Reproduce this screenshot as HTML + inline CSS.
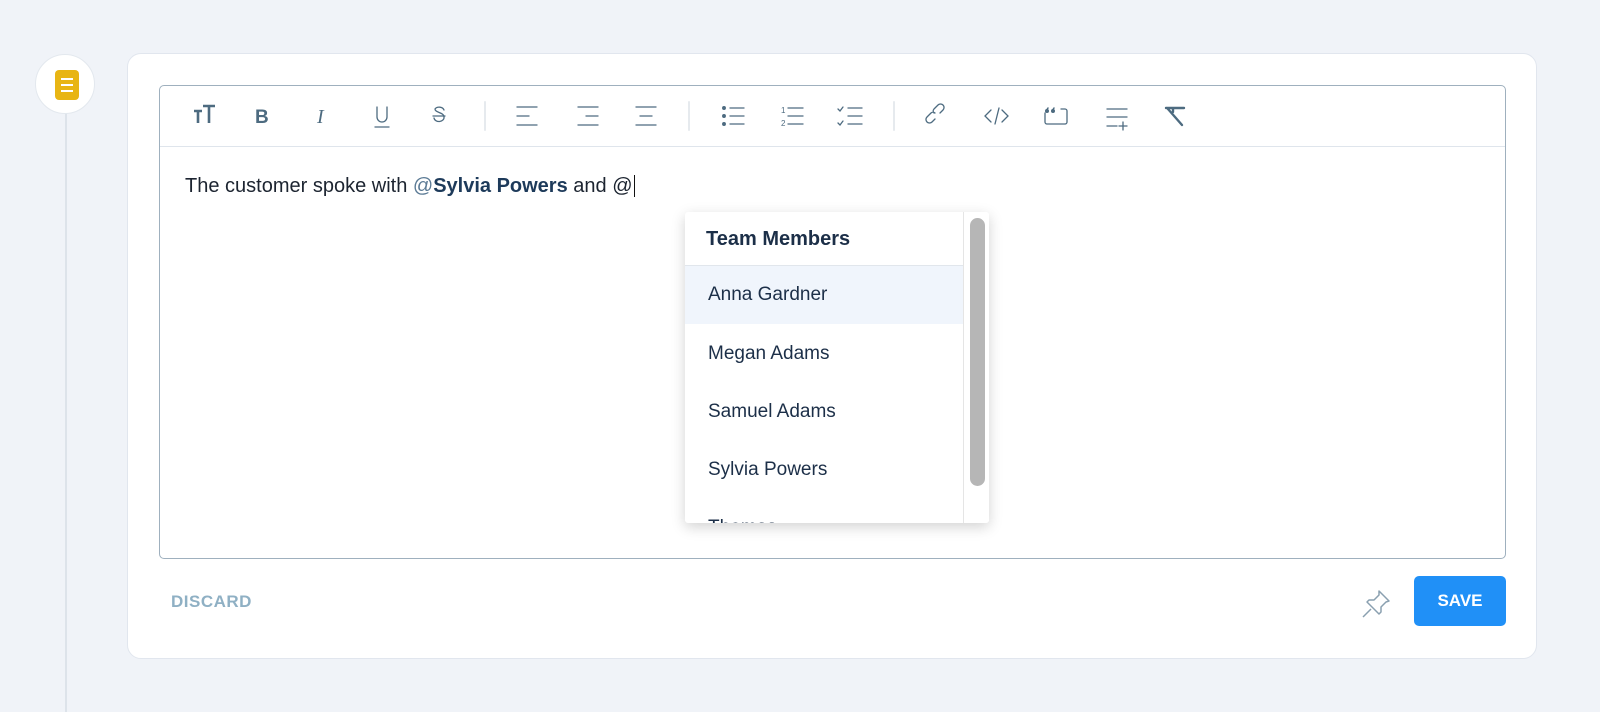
<!DOCTYPE html>
<html><head><style>
body{margin:0;width:1600px;height:699px;background:#f0f3f8;font-family:"Liberation Sans",sans-serif;position:relative;overflow:hidden}
.line{position:absolute;left:65px;top:112px;width:2px;height:600px;background:#dde3ea}
.circle{position:absolute;left:35px;top:54px;width:60px;height:60px;border-radius:50%;background:#fff;border:1px solid #e3e8ee;box-sizing:border-box}
.doc{position:absolute;left:19px;top:15px;width:24px;height:30px;background:#e8b514;border-radius:4px}
.doc i{position:absolute;left:6px;width:12px;height:2px;background:#fff}
.card{position:absolute;left:127px;top:53px;width:1410px;height:606px;background:#fff;border:1px solid #e1e6ee;border-radius:14px;box-sizing:border-box}
.ed{position:absolute;left:159px;top:85px;width:1347px;height:474px;border:1px solid #9fb0be;border-radius:5px;box-sizing:border-box}
.tb{position:absolute;left:0;top:0;right:0;height:60px;border-bottom:1px solid #dfe5ec}
.tb svg{position:absolute;top:0}
.txt{position:absolute;left:25px;top:89px;font-size:20px;color:#1c2430}
.txt b{color:#1d3a5a}
.txt .at{color:#5b7a95}
.dd{position:absolute;left:685px;top:212px;width:304px;height:311px;background:#fff;box-shadow:0 4px 14px rgba(0,0,0,.18);border-radius:3px;overflow:hidden}
.dd h{display:block;position:absolute;left:21px;top:16px;font-size:20px;font-weight:bold;color:#1c2f48}
.dd .sep{position:absolute;left:0;top:53px;width:278px;height:1px;background:#e1e6ec}
.it{position:absolute;left:0;width:278px;height:58px;font-size:19px;color:#1c2f48;padding-left:23px;box-sizing:border-box;line-height:58px}
.trk{position:absolute;left:278px;top:0;width:26px;height:311px;border-left:1px solid #e5e5e5;background:#fff}
.thumb{position:absolute;left:285px;top:6px;width:15px;height:268px;border-radius:8px;background:#b6b6b6}
.discard{position:absolute;left:171px;top:592px;font-size:17px;font-weight:bold;color:#8fb0c4;letter-spacing:.5px}
.save{position:absolute;left:1414px;top:576px;width:92px;height:50px;background:#2090f7;border-radius:5px;color:#fff;font-weight:bold;font-size:17px;text-align:center;line-height:50px}
</style></head><body>
<div class="line"></div>
<div class="circle"><div class="doc"><i style="top:8px"></i><i style="top:14px"></i><i style="top:20px"></i></div></div>
<div class="card"></div>
<div class="ed">
<div class="tb">
<svg width="1347" height="60" viewBox="0 0 1347 60" fill="none" stroke="#4d6b80" stroke-width="1.3" stroke-linecap="round">
<g stroke-width="2.6" stroke-linecap="butt"><path d="M34 25h8M38 25v12M43 20h12M49 20v17"/></g>
<text x="95" y="37" font-family="Liberation Sans" font-weight="bold" font-size="19" fill="#4d6b80" stroke="none">B</text>
<text x="157" y="37" font-family="Liberation Serif" font-style="italic" font-size="20" fill="#4d6b80" stroke="none">I</text>
<path d="M217 21v10a5 5 0 0 0 10 0v-10M215 41h14"/>
<path d="M284 24a5 4 0 0 0-9-1c0 4 9 3 9 8a5 4 0 0 1-10 1M273 30h12"/>
<path d="M325 16v28" stroke="#e6eaee" stroke-width="2"/>
<path d="M357 21h20M357 30h12M357 39h20"/>
<path d="M418 21h20M426 30h12M418 39h20"/>
<path d="M476 21h20M480 30h12M476 39h20"/>
<path d="M529 16v28" stroke="#e6eaee" stroke-width="2"/>
<circle cx="564" cy="22" r="1.3" fill="#4d6b80"/><circle cx="564" cy="30" r="1.3" fill="#4d6b80"/><circle cx="564" cy="38" r="1.3" fill="#4d6b80"/><path d="M570 22h14M570 30h14M570 38h14"/>
<text x="621" y="27" font-size="8" font-family="Liberation Sans" fill="#4d6b80" stroke="none">1</text><text x="621" y="40" font-size="8" font-family="Liberation Sans" fill="#4d6b80" stroke="none">2</text>
<path d="M628 22h15M628 30h15M628 38h15"/>
<path d="M678 23l2 2 3-4M678 37l2 2 3-4M688 22h14M688 30h14M688 38h14"/>
<path d="M734 16v28" stroke="#e6eaee" stroke-width="2"/>
<path d="M775 33l-3 3a3 3 0 0 1-5-5l4-4a3 3 0 0 1 4 0M780 27l3-3a3 3 0 0 0-5-5l-4 4a3 3 0 0 0 0 4"/>
<path d="M831 24l-6 6 6 6M842 24l6 6-6 6M839 22l-4 16"/>
<path d="M885 27v9a2 2 0 0 0 2 2h18a2 2 0 0 0 2-2v-11a2 2 0 0 0-2-2h-4"/>
<circle cx="887" cy="25" r="2" fill="#4d6b80" stroke="none"/><circle cx="893" cy="25" r="2" fill="#4d6b80" stroke="none"/>
<path d="M886 25l2-3M892 25l2-3" stroke-width="1.5"/>
<path d="M947 23h20M947 31h20M947 40h10M963 36v8M959 40h8"/>
<path d="M1006 22h18M1013 22v4M1008 23l14 16" stroke-width="2.4"/>
</svg>
</div>
<div class="txt">The customer spoke with <span class="at">@</span><b>Sylvia Powers</b> and @<span style="border-left:1px solid #111;margin-left:1px"></span></div>
</div>
<div class="dd">
<h>Team Members</h>
<div class="sep"></div>
<div class="it" style="top:54px;background:#f0f5fc">Anna Gardner</div>
<div class="it" style="top:113px">Megan Adams</div>
<div class="it" style="top:171px">Samuel Adams</div>
<div class="it" style="top:229px">Sylvia Powers</div>
<div class="it" style="top:287px">Thomas</div>
<div class="trk"></div><div class="thumb"></div>
</div>
<div class="discard">DISCARD</div>
<svg style="position:absolute;left:1360px;top:588px" width="32" height="32" viewBox="0 0 32 32" fill="none" stroke="#8aa0b0" stroke-width="1.5" stroke-linejoin="round"><path d="M19 3l10 10-3 1-5 5 0 5-2 2-12-12 2-2 5 0 5-5z"/><path d="M11 21l-8 8"/></svg>
<div class="save">SAVE</div>
</body></html>
